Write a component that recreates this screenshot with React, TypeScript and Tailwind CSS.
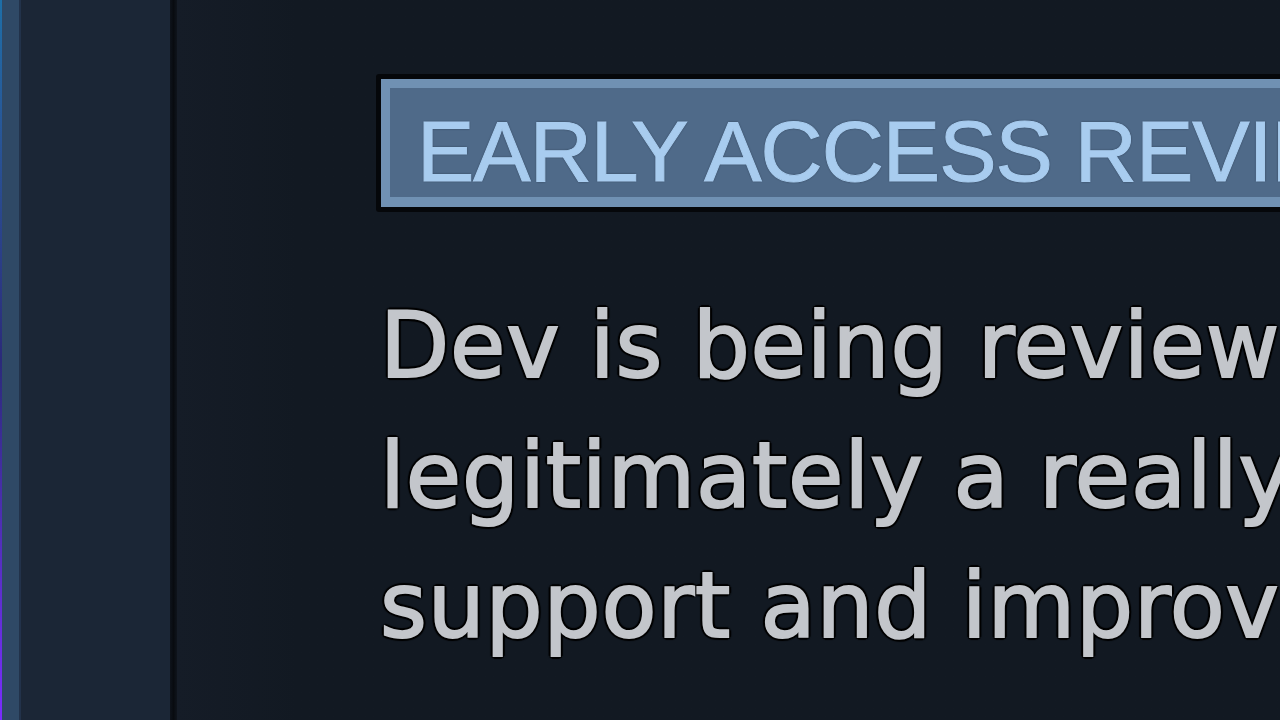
import React from "react";

export default function App() {
  return (
    <div className="flex h-[720px] w-[1280px] overflow-hidden bg-[#121922]">
      <div className="w-[2px] shrink-0 bg-gradient-to-b from-[#1d6fa8] via-[#2b2a7a] to-[#7a2cff]" />
      <div className="w-[17px] shrink-0 bg-[#2f4966]" />
      <div className="w-[2px] shrink-0 bg-[#22324a]" />
      <div className="w-[149px] shrink-0 bg-[#1b2636]" />
      <div className="w-[7px] shrink-0 bg-gradient-to-r from-[#0e131b] via-[#080b10] to-[#0f141c]" />
      <div className="relative flex min-w-0 flex-1 flex-col bg-gradient-to-r from-[#151c27] to-[#121922] to-[120px] pl-[199px] pt-[74px]">
        <div className="w-[1200px] shrink-0 border-[5px] border-[#05070a] rounded-[3px]">
          <div className="h-[128px] border-[9px] border-b-[10px] border-[#7091b3] bg-[#4f6a89] pl-[27px] pt-[20px]">
            <div
              className="whitespace-nowrap text-[86px] leading-none tracking-[-1px] text-[#a8ccef] [-webkit-text-stroke:1px_#a8ccef] [text-shadow:0_0_2px_rgba(15,25,40,0.9)]"
              style={{ fontFamily: '"Liberation Sans", Arial, sans-serif' }}
            >
              EARLY ACCESS REVIEW
            </div>
          </div>
        </div>
        <div
          className="ml-[4px] mt-[69px] whitespace-nowrap text-[90px] leading-[130px] tracking-[0.8px] text-[#c3c6cb] [-webkit-text-stroke:2px_#c3c6cb] [text-shadow:2px_2px_1px_#000,-2px_-2px_1px_#000,2px_-2px_1px_#000,-2px_2px_1px_#000,0_3px_1px_#000,0_-3px_1px_#000,3px_0_1px_#000,-3px_0_1px_#000]"
          style={{ fontFamily: '"DejaVu Sans", Verdana, sans-serif' }}
        >
          <div>Dev is being review bombed right now,</div>
          <div>legitimately a really fun game to</div>
          <div>support and improve over time.</div>
        </div>
      </div>
    </div>
  );
}
